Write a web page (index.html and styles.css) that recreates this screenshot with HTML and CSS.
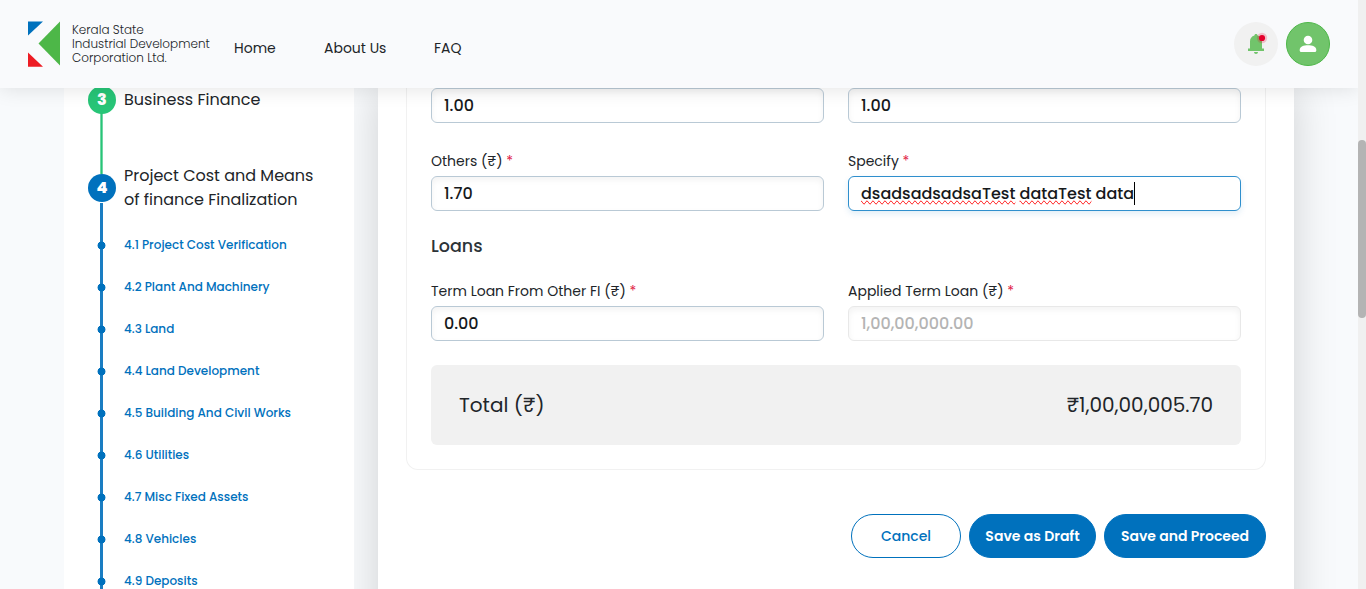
FILE: index.html
```html
<!DOCTYPE html>
<html lang="en">
<head>
<meta charset="utf-8">
<title>Kerala State Industrial Development Corporation Ltd.</title>
<link rel="stylesheet" href="styles.css">
</head>
<body>
<header class="header">
  <a class="brand">
    <svg class="brand-mark" width="32" height="46" viewBox="0 0 32 46"><path fill="#0071bd" d="M0 .5h15L0 14.500z"/><path fill="#ed1c24" d="M0 31.500 15 45.700H0z"/><path fill="#4db748" d="M32 .5v44L10.500 22.500z"/></svg>
    <span class="brand-name"><span>Kerala State</span><span>Industrial Development</span><span>Corporation Ltd.</span></span>
  </a>
  <nav class="nav"><a class="home">Home</a><a class="about">About Us</a><a class="faq">FAQ</a></nav>
  <div class="actions">
    <span class="bell">
      <svg width="44" height="44" viewBox="0 0 44 44"><path fill="#71c46b" d="M22 12c1 0 1.600.7 1.600 1.600C26.400 14.300 28 16.600 28 19.500V26.500h2V29H14v-2.500h2v-7c0-2.900 1.600-5.200 4.400-5.900 0-.9.6-1.600 1.600-1.600zM20 30h4c0 1.100-.9 2-2 2s-2-.9-2-2z"/><circle cx="28" cy="16" r="5.200" fill="#e4002b" opacity=".2"/><circle cx="28" cy="16" r="3.100" fill="#e4002b"/></svg>
    </span>
    <span class="avatar">
      <svg width="18" height="18" viewBox="0 0 18 18"><circle cx="9" cy="5" r="4.300" fill="#fff"/><path fill="#fff" d="M.7 15c0-3.400 4-4.700 8.300-4.700s8.300 1.300 8.300 4.700v.5c0 .9-.6 1.500-1.500 1.500H2.200C1.300 17 .7 16.400.7 15.500z"/></svg>
    </span>
  </div>
</header>
<div class="page">
  <aside class="sidebar">
    <ol class="steps">
      <li class="step done"><span class="num">3</span><span class="step-title">Business Finance</span></li>
      <li class="step current"><span class="num">4</span><span class="step-title">Project Cost and Means<br>of finance Finalization</span></li>
    </ol>
    <ul class="substeps">
      <li>4.1 Project Cost Verification</li>
      <li>4.2 Plant And Machinery</li>
      <li>4.3 Land</li>
      <li>4.4 Land Development</li>
      <li>4.5 Building And Civil Works</li>
      <li>4.6 Utilities</li>
      <li>4.7 Misc Fixed Assets</li>
      <li>4.8 Vehicles</li>
      <li>4.9 Deposits</li>
    </ul>
  </aside>
  <main class="panel">
    <section class="card">
      <div class="grid first">
        <div class="input">1.00</div>
        <div class="input">1.00</div>
      </div>
      <div class="grid">
        <div class="field"><label>Others (₹) <b>*</b></label><div class="input">1.70</div></div>
        <div class="field"><label>Specify <b>*</b></label><div class="input focused"><span class="typo">dsadsadsadsaTest</span>&nbsp;<span class="typo">dataTest</span>&nbsp;data<i class="caret"></i></div></div>
      </div>
      <h2 class="heading">Loans</h2>
      <div class="grid">
        <div class="field"><label>Term Loan From Other FI (₹) <b>*</b></label><div class="input">0.00</div></div>
        <div class="field"><label>Applied Term Loan (₹) <b>*</b></label><div class="input disabled">1,00,00,000.00</div></div>
      </div>
      <div class="total"><span>Total (₹)</span><span>₹1,00,00,005.70</span></div>
    </section>
    <div class="buttons">
      <button class="btn cancel">Cancel</button>
      <button class="btn draft">Save as Draft</button>
      <button class="btn proceed">Save and Proceed</button>
    </div>
  </main>
</div>
<div class="scrollbar"><div class="thumb"></div></div>
</body>
</html>
```
FILE: styles.css
```css
* { box-sizing: border-box; }
html, body { margin: 0; height: 589px; overflow: hidden; }
body {
  position: relative;
  background: #f8fafc;
  color: #212529;
  font-family: Poppins, Inter, sans-serif;
}

/* Header */
.header {
  position: relative;
  z-index: 2;
  display: flex;
  align-items: center;
  width: 1358px;
  height: 88px;
  padding: 0 28px;
  background: #f9fafc;
  box-shadow: 0 0 20px rgba(0, 0, 0, .12);
}
.brand { display: flex; align-items: center; gap: 12px; width: 206px; }
.brand-name { display: flex; flex-direction: column; font-size: 12px; font-weight: 300; line-height: 14px; white-space: nowrap; }
.nav { display: flex; padding-top: 8px; font-size: 14px; line-height: 20px; }
.home { width: 90px; }
.about { width: 110px; }
.actions { display: flex; gap: 8px; margin-left: auto; }
.bell, .avatar { display: flex; align-items: center; justify-content: center; width: 44px; height: 44px; border-radius: 50%; }
.bell { background: #f1f1f1; }
.avatar { background: #71c46b; border: 1px solid #4db748; }

/* Page columns */
.page { display: flex; gap: 24px; height: 501px; padding-left: 64px; overflow: hidden; }
.sidebar { position: relative; z-index: 1; flex: none; width: 290px; padding-left: 24px; background: #fff; }
.panel { flex: none; width: 916px; height: 600px; padding: 0 28px; background: #fff; box-shadow: 0 0 40px rgba(0, 0, 0, .17); }

/* Steps */
.steps, .substeps { margin: 0; padding: 0; list-style: none; }
.step { display: flex; gap: 8px; font-size: 16px; line-height: 24px; }
.num {
  flex: none;
  width: 28px;
  height: 28px;
  border-radius: 50%;
  color: #fff;
  font-weight: 800;
  line-height: 28px;
  text-align: center;
}
.done { height: 88px; margin-top: -2px; background: linear-gradient(90deg, #71d7a5 1px, #27c577 1px, #27c577 2px, #71d7a5 2px) 12px 0 / 3px 100% no-repeat; }
.done .num { background: #27c577; }
.done .step-title { padding-top: 2px; }
.current .num { background: #0071bd; }
.current .step-title { margin-top: -10px; }
.substeps {
  margin-top: -9px;
  padding-top: 21px;
  background: linear-gradient(#1a7dc2, #1a7dc2) 12px 0 / 3px 100% no-repeat;
}
.substeps li {
  height: 42px;
  padding-left: 36px;
  color: #0071bd;
  background: radial-gradient(circle, #0071bd 3.600px, transparent 4.300px) 9px 17px / 9px 9px no-repeat;
  font-size: 12px;
  font-weight: 500;
  line-height: 42px;
}

/* Form card */
.card {
  height: 382px;
  padding: 0 24px;
  border: 1px solid #f1f1f1;
  border-top: 0;
  border-radius: 0 0 12px 12px;
}
.grid { display: grid; grid-template-columns: 1fr 1fr; gap: 24px; }
.first { margin-bottom: 28px; }
.field { display: flex; flex-direction: column; gap: 5px; }
label { height: 20px; font-size: 14px; line-height: 20px; white-space: nowrap; }
label b { color: #e11d48; font-weight: 400; }
.input {
  display: flex;
  align-items: center;
  height: 35px;
  padding: 0 12px;
  border: 1px solid #b9c9d5;
  border-radius: 6px;
  box-shadow: inset 0 3px 6px rgba(0, 0, 0, .05);
  background: #fff;
  color: #16191c;
  font-size: 16px;
  font-weight: 500;
}
.focused { border-color: #2f8fcd; box-shadow: 0 3px 6px rgba(0, 113, 189, .12); }
.typo { text-decoration-line: spelling-error; }
.caret { width: 1px; height: 23px; background: #000; }
.disabled { border-color: #e8e8e8; color: #b4b4b4; }
.heading { margin: 25px 0; font-size: 17.5px; font-weight: 500; line-height: 20px; color: #2c3338; }
.total {
  display: flex;
  align-items: center;
  justify-content: space-between;
  height: 80px;
  margin-top: 24px;
  padding: 0 28px;
  border-radius: 6px;
  background: #f1f1f1;
  font-size: 20px;
}

/* Buttons */
.buttons { display: flex; justify-content: flex-end; gap: 8px; margin-top: 44px; }
.btn {
  height: 44px;
  padding: 0;
  border: 1px solid #0071bd;
  border-radius: 22px;
  background: #0071bd;
  color: #fff;
  font: 600 14px Poppins, Inter, sans-serif;
}
.cancel { width: 110px; background: #fff; color: #0071bd; font-weight: 500; }
.draft { width: 127px; }
.proceed { width: 162px; }

/* Scrollbar */
.scrollbar { position: absolute; top: 0; right: 0; z-index: 3; width: 8px; height: 589px; padding-top: 140px; background: #f0f0f0; }
.thumb { height: 178px; border-radius: 4px; background: #b4b4b4; }
```
